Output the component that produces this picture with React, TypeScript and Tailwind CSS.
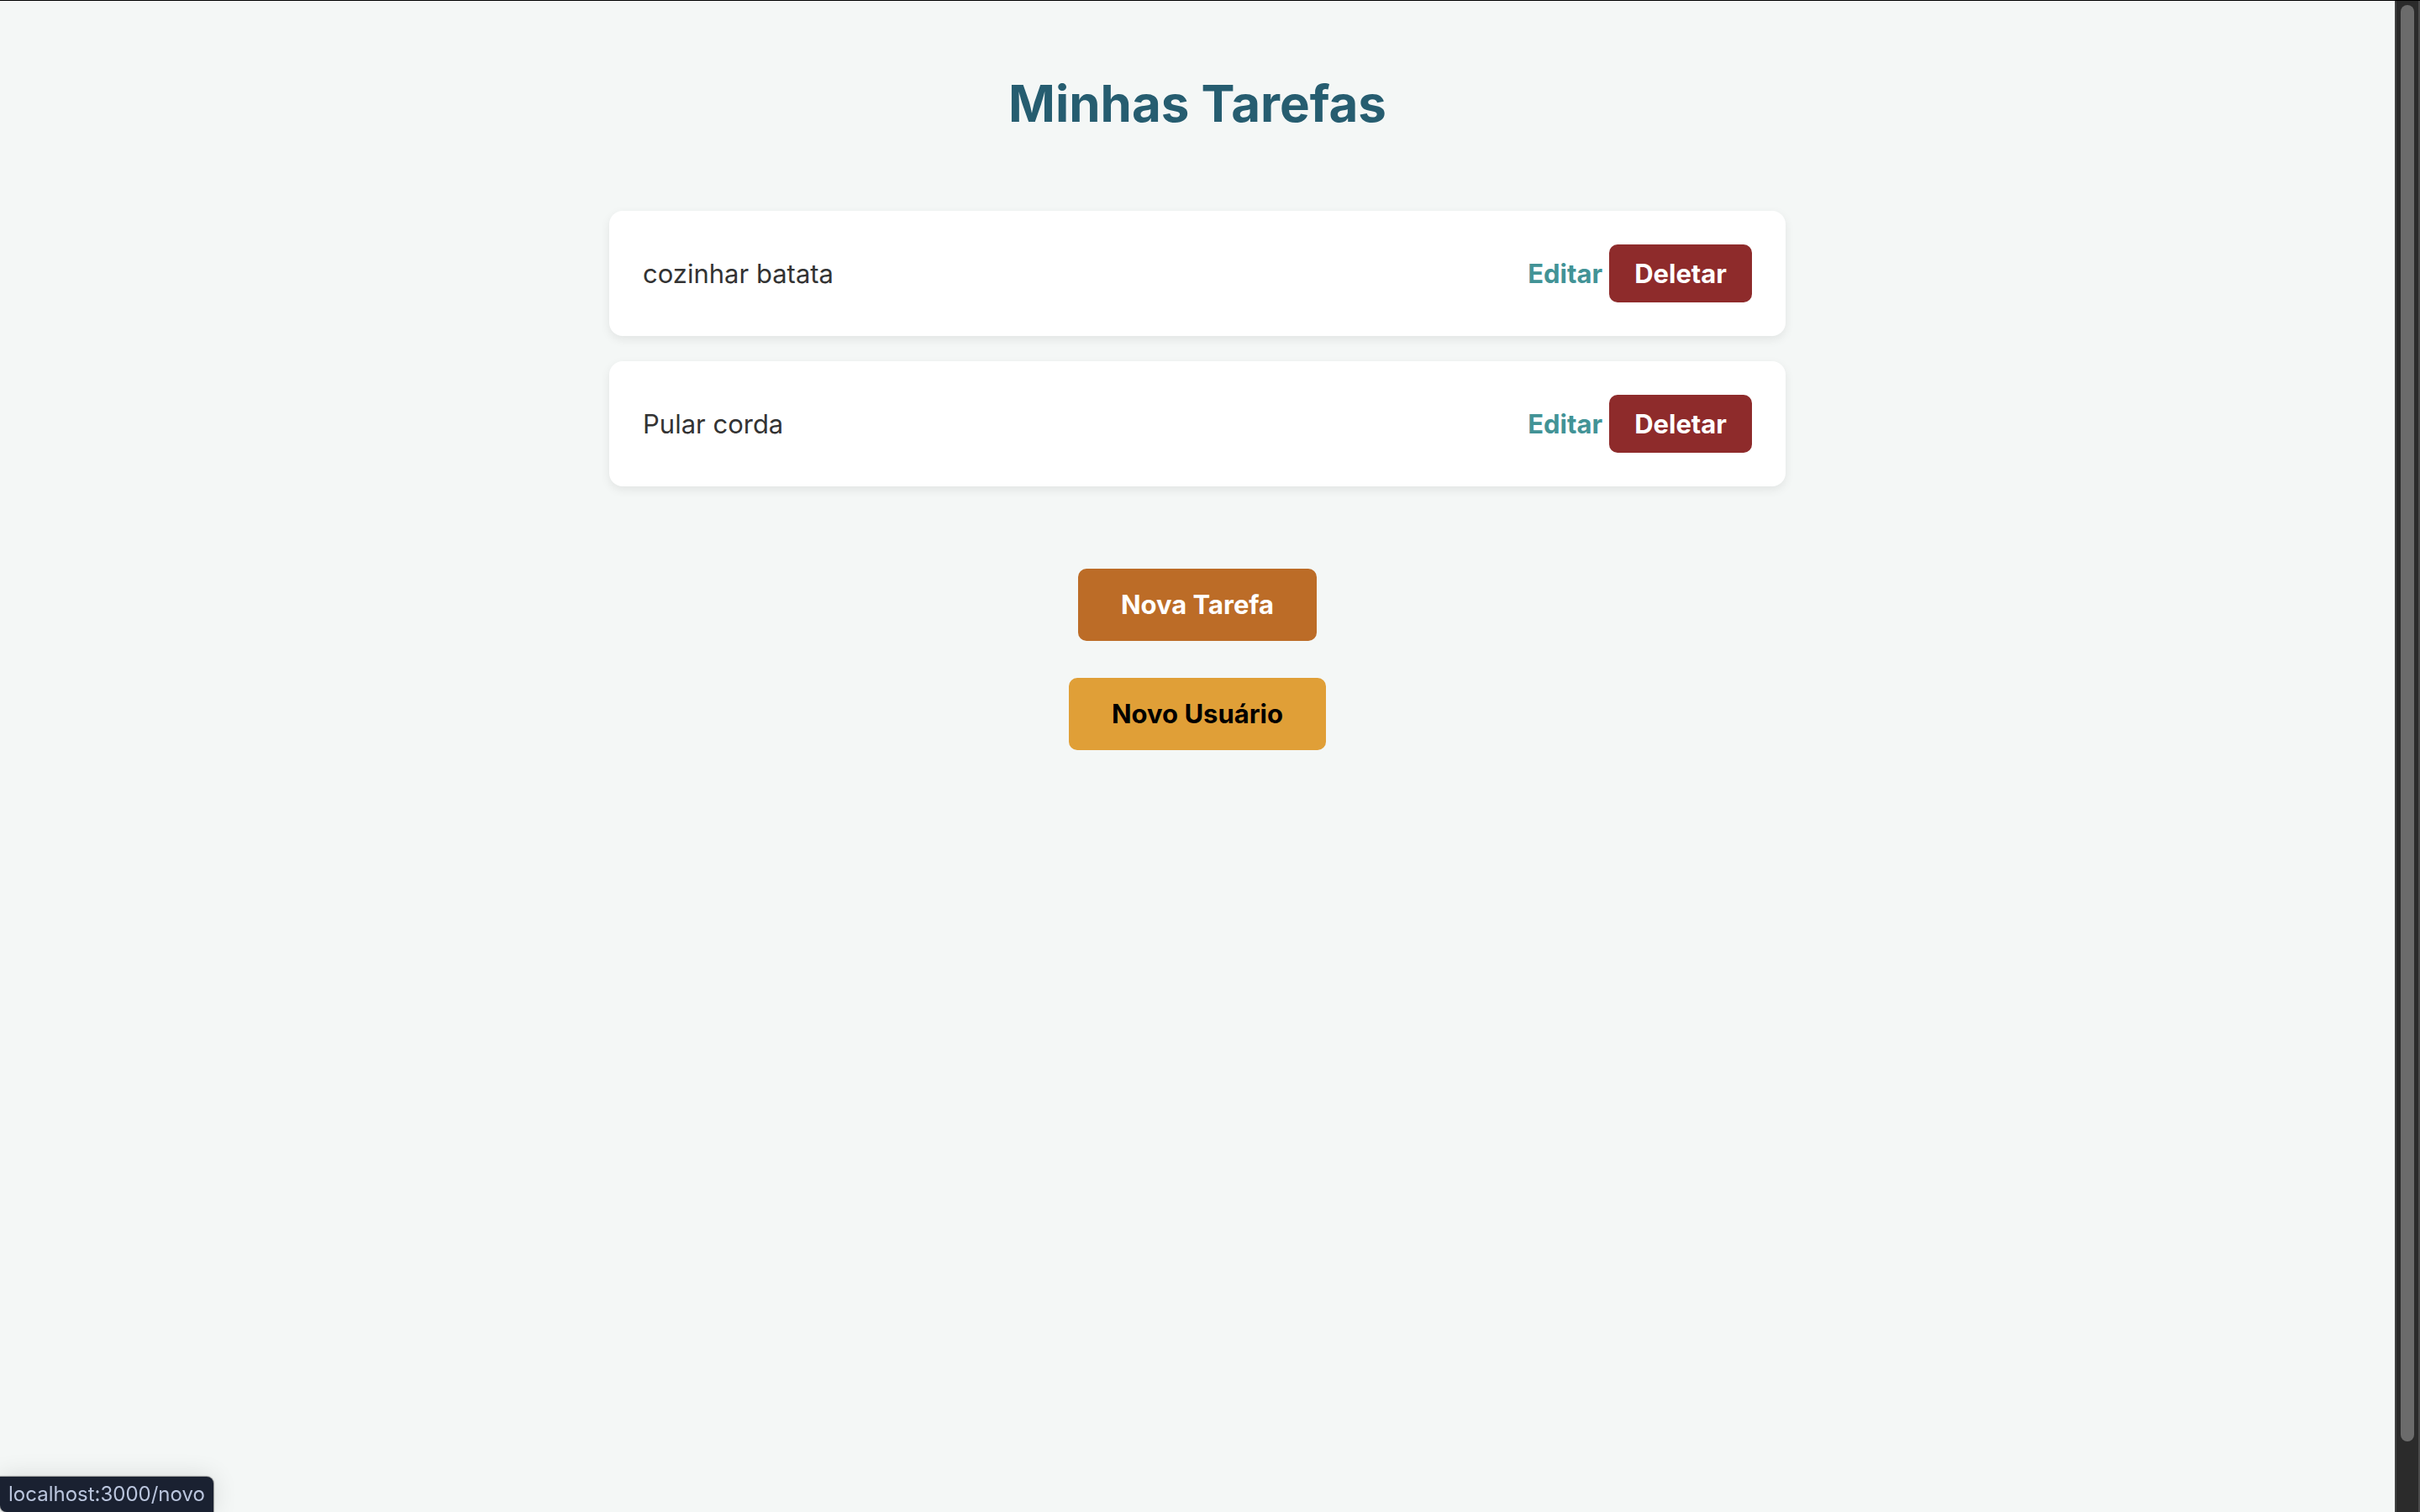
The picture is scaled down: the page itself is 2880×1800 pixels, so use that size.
const tasks = [
  { id: 1, name: "cozinhar batata" },
  { id: 2, name: "Pular corda" },
];

function TaskCard({ name }: { name: string }) {
  return (
    <li className="flex items-center justify-between rounded-2xl bg-white p-10 shadow-[0_4px_12px_rgba(0,0,0,0.08)]">
      <span className="text-[31px] leading-9 text-[#333333]">{name}</span>
      <div className="flex items-center gap-2">
        <a href="#editar" className="text-[31px] leading-9 font-bold text-[#429396]">
          Editar
        </a>
        <button
          type="button"
          className="rounded-[10px] bg-[#8e2b2b] px-[30px] py-4 text-[31px] leading-[37px] font-bold text-white"
        >
          Deletar
        </button>
      </div>
    </li>
  );
}

function ScrollTrack() {
  return (
    <div
      aria-hidden="true"
      className="flex w-[30px] shrink-0 flex-col items-center border-x-2 border-l-[#414141] border-r-[#4b4b4b] bg-[#2b2b2b] pt-[5px]"
    >
      <div className="h-[95.3%] w-4 rounded-full bg-[#6b6b6b]" />
    </div>
  );
}

export default function App() {
  return (
    <div className="flex min-h-screen border-t border-black bg-[#f4f7f6] font-[Inter,sans-serif]">
      <main className="flex flex-1 flex-col items-center px-10 pt-20">
        <h1 className="text-[60px] leading-[84px] font-bold text-[#265d70]">Minhas Tarefas</h1>
        <ul className="mt-[86px] flex w-full max-w-[1400px] flex-col gap-[30px]">
          {tasks.map((task) => (
            <TaskCard key={task.id} name={task.name} />
          ))}
        </ul>
        <nav className="mt-[98px] flex flex-col items-center gap-11">
          <a
            href="#novo"
            className="rounded-[10px] bg-[#bc6c27] px-[51px] py-6 text-[31px] leading-[38px] font-bold text-white"
          >
            Nova Tarefa
          </a>
          <a
            href="#usuario"
            className="rounded-[10px] bg-[#e09f37] px-[51px] py-6 text-[31px] leading-[38px] font-bold text-black"
          >
            Novo Usuário
          </a>
        </nav>
      </main>
      <ScrollTrack />
      <div className="fixed bottom-0 left-0 rounded-tr-lg rounded-bl-lg bg-[#1a2131] px-2.5 py-1 text-2xl leading-[34px] text-[#bac5dd] shadow-[0_0_1px_1px_rgba(0,0,0,0.35),0_0_30px_rgba(0,0,0,0.12)]">
        localhost:3000/novo
      </div>
    </div>
  );
}
